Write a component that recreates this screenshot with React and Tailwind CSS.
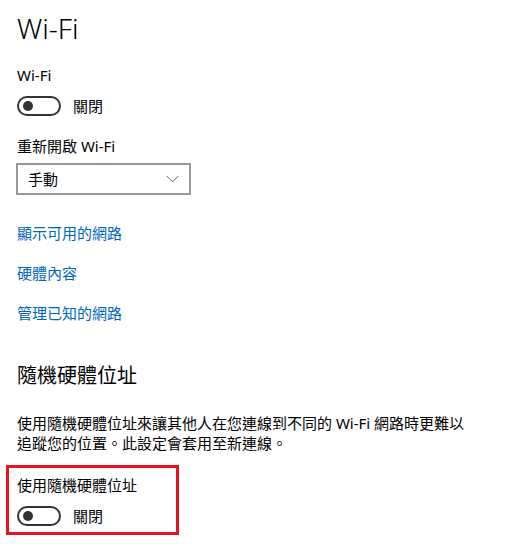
import React from "react";

const font = { fontFamily: '"Segoe UI", "Noto Sans", "Noto Sans CJK TC", sans-serif' };

function Toggle() {
  return (
    <div className="flex items-center h-[20px]">
      <div className="relative w-[44px] h-[20px] rounded-full border-2 border-[#333333] box-border">
        <div className="absolute left-[4px] top-[3px] w-[10px] h-[10px] rounded-full bg-[#333333]" />
      </div>
      <span className="ml-[12px] text-[15px] leading-[20px] text-black">關閉</span>
    </div>
  );
}

export default function App() {
  return (
    <div className="bg-white w-[511px] h-[554px] overflow-hidden pl-[17px] pt-[10px] text-black" style={font}>
      <div className="text-[28px] leading-[36px] font-light">Wi-Fi</div>
      <div className="mt-[19px] text-[15px] leading-[20px]">Wi-Fi</div>
      <div className="mt-[11px]"><Toggle /></div>
      <div className="mt-[20px] text-[15px] leading-[20px]">重新開啟 Wi-Fi</div>
      <div className="mt-[7px] -ml-[1px] w-[175px] h-[32px] border-2 border-[#999999] flex items-center justify-between pl-[10px] pr-[9px]">
        <span className="text-[15px] leading-[20px]">手動</span>
        <svg width="13" height="8" viewBox="0 0 13 8" className="mr-[1px]">
          <polyline points="0.5,0.8 6.5,6.8 12.5,0.8" fill="none" stroke="#666666" strokeWidth="1" />
        </svg>
      </div>
      <div className="mt-[28px] text-[15px] leading-[20px] text-[#0067c0]">顯示可用的網路</div>
      <div className="mt-[20px] text-[15px] leading-[20px] text-[#0067c0]">硬體內容</div>
      <div className="mt-[20px] text-[15px] leading-[20px] text-[#0067c0]">管理已知的網路</div>
      <div className="mt-[39px] text-[20px] leading-[28px]">隨機硬體位址</div>
      <div className="mt-[23px] text-[15px] leading-[20px] w-[470px]">
        使用隨機硬體位址來讓其他人在您連線到不同的 Wi-Fi 網路時更難以<br />追蹤您的位置。此設定會套用至新連線。
      </div>
      <div className="mt-[12px] -ml-[11px] w-[173px] border-[3px] border-[#e81123] pl-[8px] pt-[7px] pb-[6px]">
        <div className="text-[15px] leading-[20px]">使用隨機硬體位址</div>
        <div className="mt-[11px]"><Toggle /></div>
      </div>
    </div>
  );
}
